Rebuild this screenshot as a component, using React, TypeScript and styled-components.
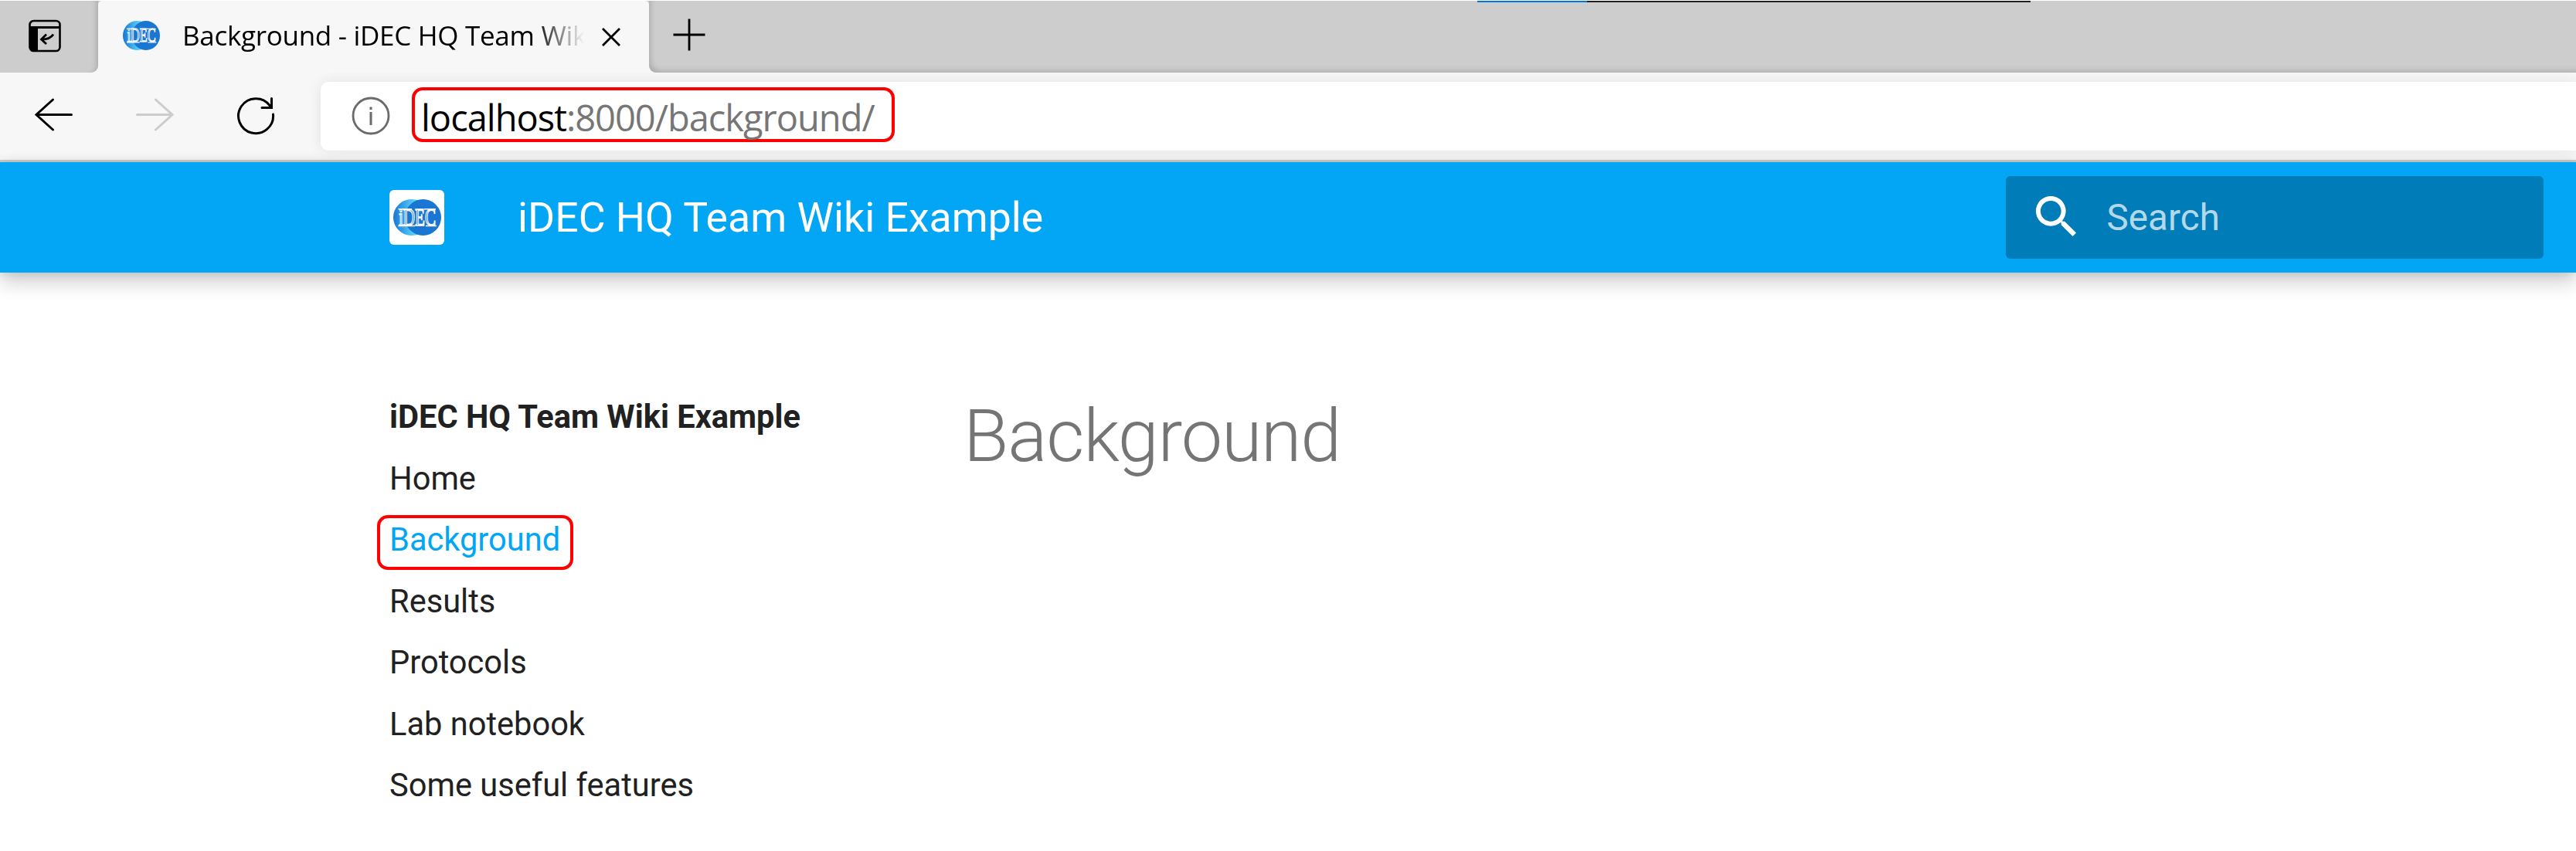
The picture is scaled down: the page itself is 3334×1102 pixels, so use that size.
import React from "react";
import styled, { createGlobalStyle } from "styled-components";

const GlobalStyle = createGlobalStyle`
  * { box-sizing: border-box; }
  body { margin: 0; background: #fff; }
`;

const ui = `"Open Sans", "Noto Sans", sans-serif`;
const site = `Roboto, "Liberation Sans", sans-serif`;

const Page = styled.div`
  width: 3334px;
  height: 1102px;
  overflow: hidden;
  background: #fff;
  font-family: ${site};
  display: flex;
  flex-direction: column;
`;

const TabStrip = styled.div`
  position: relative;
  height: 94px;
  border-top: 1px solid #fff;
  background: #cdcdcd;
  display: flex;
  flex: none;
`;

const StripSide = styled.div<{ $side: "left" | "right" }>`
  height: 93px;
  background: #cdcdcd;
  ${(p) =>
    p.$side === "left"
      ? "width: 127px; flex: none; border-radius: 0 0 9px 0; padding: 24px 0 0 37px; box-shadow: inset -7px 0 7px -5px rgba(0,0,0,.18);"
      : "flex: 1; border-radius: 0 0 0 9px; padding: 23px 0 0 31px; box-shadow: inset 7px -7px 7px -5px rgba(0,0,0,.16);"}
  svg { display: block; }
`;

const TabBack = styled.div`
  display: flex;
  flex: 1;
  background: linear-gradient(#cdcdcd 50%, #f7f7f7 50%);
`;

const Tab = styled.div`
  width: 713px;
  height: 93px;
  background: #f7f7f7;
  border-radius: 5px 5px 0 0;
  display: flex;
  align-items: flex-start;
  padding-left: 32px;
`;

const TabIcon = styled.div`
  padding-top: 26px;
  width: 77px;
  flex: none;
  svg { display: block; }
`;

const TabTitle = styled.div`
  width: 522px;
  padding-top: 20px;
  font: 400 35px/50px ${ui};
  letter-spacing: -0.3px;
  white-space: nowrap;
  overflow: hidden;
  color: #000;
  mask-image: linear-gradient(to right, #000 455px, transparent 520px);
`;

const TabClose = styled.div`
  padding: 34px 0 0 20px;
  svg { display: block; }
`;

const Progress = styled.div`
  position: absolute;
  left: 1912px;
  top: 0;
  width: 716px;
  height: 2px;
  background: linear-gradient(to right, #0078d7 142px, #1f211f 142px);
`;

const Toolbar = styled.div`
  height: 116px;
  flex: none;
  background: #f7f7f7;
  border-bottom: 3px solid #ccc;
  display: flex;
  padding-top: 12px;
  overflow: hidden;
`;

const NavButtons = styled.div`
  width: 415px;
  flex: none;
  display: flex;
  padding: 20px 0 0 44px;
  gap: 81px;
  svg { display: block; }
`;

const AddressBar = styled.div`
  flex: 1;
  height: 89px;
  background: #fff;
  border-radius: 10px 0 0 10px;
  box-shadow: 0 0 18px rgba(0, 0, 0, 0.09);
  display: flex;
  padding: 7px 0 0 40px;
  svg { display: block; margin-top: 12px; flex: none; }
`;

const UrlFrame = styled.div`
  margin-left: 28px;
  width: 625px;
  height: 71px;
  border: 4px solid #f00;
  border-radius: 14px;
  padding-left: 8px;
  font: 400 47px/70px ${ui};
  letter-spacing: -1px;
  white-space: nowrap;
  color: #767676;
  b { font-weight: 400; color: #000; }
`;

const Header = styled.header`
  position: relative;
  height: 143px;
  flex: none;
  background: #03a6f5;
  box-shadow: 0 0 12px rgba(0, 0, 0, 0.1), 0 12px 24px rgba(0, 0, 0, 0.2);
  display: flex;
  align-items: center;
  padding: 0 42px 0 504px;
`;

const LogoTile = styled.div`
  width: 71px;
  height: 71px;
  border-radius: 6px;
  background: #fff;
  display: flex;
  align-items: center;
  justify-content: center;
`;

const SiteTitle = styled.div`
  margin-left: 95px;
  flex: 1;
  font-size: 53.6px;
  line-height: 72px;
  color: #fff;
`;

const SearchBox = styled.div`
  width: 696px;
  height: 107px;
  border-radius: 6px;
  background: #007cb8;
  display: flex;
  align-items: center;
  padding-left: 30px;
  font-size: 47.7px;
  color: #b2d8ea;
  svg { display: block; margin-right: 29px; margin-top: -2px; }
`;

const Main = styled.main`
  display: flex;
  padding-left: 504px;
`;

const Nav = styled.nav`
  width: 743px;
  padding-top: 147px;
  display: flex;
  flex-direction: column;
  align-items: flex-start;
`;

const NavItem = styled.a<{ $bold?: boolean; $active?: boolean }>`
  position: relative;
  height: 79.5px;
  line-height: 79.5px;
  font-size: 41.6px;
  font-weight: ${(p) => (p.$bold ? 700 : 400)};
  color: ${(p) => (p.$active ? "#03a6f5" : "#212121")};
  white-space: nowrap;
`;

const Highlight = styled.span`
  position: absolute;
  left: -16px;
  top: 8px;
  width: 254px;
  height: 71px;
  border: 4px solid #f00;
  border-radius: 14px;
`;

const Heading = styled.h1`
  margin: 149px 0 0;
  font-size: 95.4px;
  line-height: 124px;
  font-weight: 300;
  letter-spacing: -1.2px;
  color: #757575;
`;

const LogoSvg = styled.svg`
  display: block;
  overflow: visible;
`;

const Logo = ({ width, height, id }: { width: number; height: number; id: string }) => (
  <LogoSvg width={width} height={height} viewBox="0 0 62 47" preserveAspectRatio="none">
    <defs>
      <linearGradient id={id} x1="0" x2="1">
        <stop offset="0" stopColor="#1976d2" />
        <stop offset="0.55" stopColor="#56d0fb" />
      </linearGradient>
    </defs>
    <rect width="48" height="47" rx="23.5" fill={`url(#${id})`} />
    <rect x="15" width="47" height="47" rx="23.5" fill="#1976d2" />
    <text x="7" y="34" textLength="48" lengthAdjust="spacingAndGlyphs" fontFamily="Liberation Serif, serif" fontSize="32" fill="#1976d2" stroke="#fff" strokeWidth="1.5">iDEC</text>
    <path d="M6.5 12.8H24M6.5 34.5H28M40 12.8H55M42 34.5H56" stroke="#fff" strokeWidth="1.4" />
  </LogoSvg>
);

const items = ["Home", "Background", "Results", "Protocols", "Lab notebook", "Some useful features"];

export default function App() {
  return (
    <Page>
      <GlobalStyle />
      <TabStrip>
        <TabBack>
          <StripSide $side="left">
            <svg width="43" height="43" viewBox="0 0 43 43" fill="none" stroke="#000">
              <rect x="1.5" y="2" width="39" height="39" rx="5" strokeWidth="2.6" />
              <path d="M2 10.5H40" strokeWidth="3" />
              <path d="M1.5 10H12V41H6Q1.5 41 1.5 36Z" fill="#000" stroke="none" />
              <path d="M32 19.5Q28 26 17 26M23 19.5L16.5 26L23 32" strokeWidth="2.8" />
            </svg>
          </StripSide>
          <Tab>
            <TabIcon><Logo width={48} height={38} id="tab-logo" /></TabIcon>
            <TabTitle>Background - iDEC HQ Team Wiki</TabTitle>
            <TabClose>
              <svg width="26" height="26" viewBox="0 0 26 26" stroke="#000" strokeWidth="2.8"><path d="M2 2L24 24M24 2L2 24" /></svg>
            </TabClose>
          </Tab>
          <StripSide $side="right">
            <svg width="42" height="42" viewBox="0 0 42 42" stroke="#000" strokeWidth="2.8"><path d="M21 0.5V41.5M0.5 21H41.5" /></svg>
          </StripSide>
        </TabBack>
        <Progress />
      </TabStrip>
      <Toolbar>
        <NavButtons>
          <svg width="50" height="50" viewBox="0 0 50 50" fill="none" stroke="#000" strokeWidth="3" strokeLinecap="round"><path d="M48.5 22.5H3M24.5 3L3 22.5L24.5 42" /></svg>
          <svg width="50" height="50" viewBox="0 0 50 50" fill="none" stroke="#ccc" strokeWidth="3" strokeLinecap="round"><path d="M2.5 22.5H48M26.5 3L48 22.5L26.5 42" /></svg>
          <svg width="50" height="50" viewBox="0 0 50 50" fill="none" stroke="#000" strokeWidth="3" strokeLinecap="round"><path d="M47.5 22A22.5 22.5 0 1 1 43 10.5M45.5 1.5V13.5H33" /></svg>
        </NavButtons>
        <AddressBar>
          <svg width="50" height="50" viewBox="0 0 50 50" fill="none" stroke="#6b6b6b" strokeWidth="2.8"><circle cx="25" cy="25" r="23" /><path d="M25 20V37M25 13.5V17" strokeWidth="3" /></svg>
          <UrlFrame><b>localhost</b>:8000/background/</UrlFrame>
        </AddressBar>
      </Toolbar>
      <Header>
        <LogoTile><Logo width={62} height={47} id="site-logo" /></LogoTile>
        <SiteTitle>iDEC HQ Team Wiki Example</SiteTitle>
        <SearchBox>
          <svg width="71.5" height="71.5" viewBox="0 0 24 24" fill="#fff"><path d="M9.5 3A6.5 6.5 0 0 1 16 9.5c0 1.61-.59 3.09-1.56 4.23l.27.27h.79l5 5-1.5 1.5-5-5v-.79l-.27-.27A6.516 6.516 0 0 1 9.5 16 6.5 6.5 0 0 1 3 9.5 6.5 6.5 0 0 1 9.5 3m0 2C7 5 5 7 5 9.5S7 14 9.5 14 14 12 14 9.5 12 5 9.5 5Z" /></svg>
          Search
        </SearchBox>
      </Header>
      <Main>
        <Nav>
          <NavItem $bold>iDEC HQ Team Wiki Example</NavItem>
          {items.map((item) => (
            <NavItem key={item} $active={item === "Background"}>
              {item}
              {item === "Background" && <Highlight />}
            </NavItem>
          ))}
        </Nav>
        <Heading>Background</Heading>
      </Main>
    </Page>
  );
}
